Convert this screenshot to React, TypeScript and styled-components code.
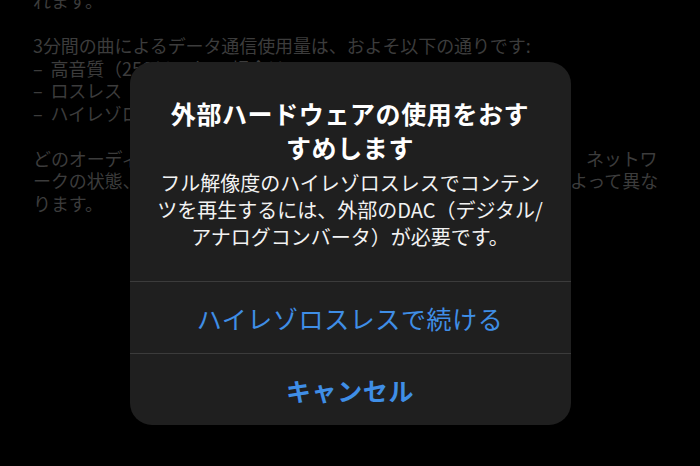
import React from "react";
import styled, { createGlobalStyle } from "styled-components";

const GlobalStyle = createGlobalStyle`
  html, body {
    margin: 0;
    padding: 0;
    background: #000;
    overflow: hidden;
  }
  body {
    width: 700px;
    height: 466px;
    font-family: "Noto Sans CJK JP", "Noto Sans", sans-serif;
  }
`;

const Page = styled.div`
  position: relative;
  width: 700px;
  height: 466px;
  overflow: hidden;
  background: #000;
`;

const Backdrop = styled.div`
  padding: 0 0 0 33px;
  margin-top: -11px;
  color: #3c3c3c;
  font-family: "Noto Sans CJK JP", sans-serif;
  font-size: 18px;
  font-weight: 400;
  line-height: 22.5px;
  letter-spacing: -0.1px;
  white-space: nowrap;
`;

const Para = styled.p`
  margin: 0 0 22.5px;
`;

const Overlay = styled.div`
  position: absolute;
  inset: 0;
  display: flex;
  justify-content: center;
  align-items: flex-start;
  padding-top: 62px;
`;

const Alert = styled.div`
  width: 441px;
  background: #1f1f1f;
  border-radius: 22px;
  overflow: hidden;
  display: flex;
  flex-direction: column;
`;

const Body = styled.div`
  padding: 34px 10px 31px;
  text-align: center;
  white-space: nowrap;
`;

const Title = styled.h2`
  margin: 0;
  color: #fff;
  font-size: 25px;
  font-weight: 700;
  line-height: 34px;
  letter-spacing: 0.6px;
`;

const Message = styled.p`
  margin: 5px 0 0;
  color: #f2f2f2;
  font-size: 20px;
  font-weight: 400;
  line-height: 27px;
`;

const Action = styled.button<{ $bold?: boolean }>`
  height: 72px;
  border: none;
  border-top: 1px solid #3b3b3b;
  background: transparent;
  color: #3f8ee6;
  font-family: "Noto Sans CJK JP", "Noto Sans", sans-serif;
  font-size: 25px;
  font-weight: ${(p) => (p.$bold ? 700 : 400)};
  letter-spacing: 0.6px;
  cursor: pointer;
  padding: 0;
`;

export default function App() {
  return (
    <Page>
      <GlobalStyle />
      <Backdrop>
        <Para>れます。</Para>
        <Para>
          3分間の曲によるデータ通信使用量は、およそ以下の通りです:
          <br />–&nbsp;&nbsp;高音質（256 kbps）の場合は6 MB
          <br />–&nbsp;&nbsp;ロスレス（24ビット/48 kHz）の場合は36 MB
          <br />–&nbsp;&nbsp;ハイレゾロスレス（24ビット/192 kHz）の場合は145 MB
        </Para>
        <Para>
          どのオーディオ品質でストリーミングされるかは、利用可能な帯域　ネットワ
          <br />
          ークの状態、お使いのスピーカーやヘッドフォンの性能などの差によって異な
          <br />
          ります。
        </Para>
      </Backdrop>
      <Overlay>
        <Alert>
          <Body>
            <Title>
              外部ハードウェアの使用をおす
              <br />
              すめします
            </Title>
            <Message>
              フル解像度のハイレゾロスレスでコンテン
              <br />
              ツを再生するには、外部のDAC（デジタル/
              <br />
              アナログコンバータ）が必要です。
            </Message>
          </Body>
          <Action>ハイレゾロスレスで続ける</Action>
          <Action $bold>キャンセル</Action>
        </Alert>
      </Overlay>
    </Page>
  );
}
